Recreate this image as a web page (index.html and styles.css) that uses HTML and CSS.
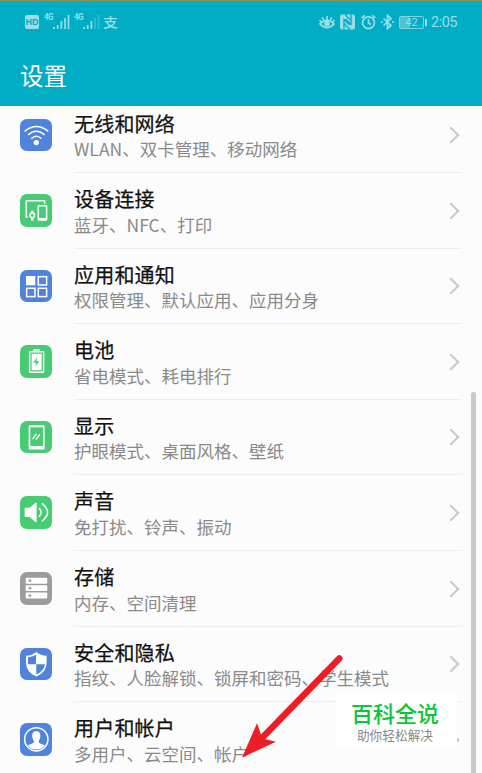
FILE: index.html
```html
<!DOCTYPE html>
<html lang="zh-CN">
<head>
    <meta charset="UTF-8">
    <meta name="viewport" content="width=device-width, initial-scale=1.0">
    <title>设置</title>
    <link rel="stylesheet" href="styles.css">
</head>
<body>
    <header>
        <div class="status-bar">
            <div class="status-left">
                <span class="hd">HD</span>
                <span class="network">4G</span>
                <svg class="signal" width="17" height="16" viewBox="0 0 17 16"><path d="M1 13v2M4.7 11v4M8.4 7v8M12 4v11M15.5 1v14"/></svg>
                <span class="network">4G</span>
                <svg class="signal" width="17" height="16" viewBox="0 0 17 16"><path d="M1 13v2M4.7 11v4M8.4 7v8"/><path opacity=".35" d="M12 4v11M15.5 1v14"/></svg>
                <span class="pay">支</span>
            </div>
            <div class="status-right">
                <svg width="16" height="16" viewBox="0 0 17 16"><path fill="none" stroke="currentColor" stroke-width="1.7" d="M1 10Q8.5 2.5 16 10Q8.5 18 1 10ZM8.5 1.5v4M3.5 3l1.500 3M13.5 3l-1.500 3M.5 6l2 2M16.500 6l-2 2"/><circle cx="8.500" cy="9.800" r="3" fill="currentColor"/></svg>
                <svg class="nfc" width="15" height="16" viewBox="0 0 15 16"><rect x="0" y=".5" width="15" height="15" rx="2" fill="currentColor"/><path fill="none" stroke="#00adc4" stroke-width="1.300" d="M4 15.500V5.500L9.500 11M11 .5V10.500L5.500 5M5 .5L11 6.500M10 15.500L4 9.500"/></svg>
                <svg class="alarm" width="15" height="16" viewBox="0 0 15 16" fill="none" stroke="currentColor" stroke-width="1.700"><circle cx="7.500" cy="8.700" r="5.900"/><path d="M7.500 5v4l2.500 1.500M.7 4l3-2.700M14.300 4l-3-2.700"/></svg>
                <svg class="bluetooth" width="13" height="16" viewBox="0 0 13 16" fill="none" stroke="currentColor" stroke-width="1.700"><path d="M2.500 4.500l7.500 7L6.500 14.500V1.500l3.500 3l-7.500 7M0 8h2M11 8h2"/></svg>
                <span class="battery"><span>42</span></span>
                <span class="time">2:05</span>
            </div>
        </div>
        <h1>设置</h1>
    </header>
    <main>
        <ul class="settings">
            <li>
                <svg class="icon blue" viewBox="0 0 98 98">
                    <g class="line"><path d="M14 37Q49 8 85 37M24 48Q49 26 74 48M34 59Q49 44 64 59"/></g>
                    <circle cx="49" cy="71" r="8"/>
                </svg>
                <div class="text"><h2>无线和网络</h2><p>WLAN、双卡管理、移动网络</p></div>
                <i class="arrow"></i>
            </li>
            <li>
                <svg class="icon green" viewBox="0 0 98 98">
                    <g class="line"><path d="M23 69H19V20H74V30"/><rect x="55" y="35" width="25" height="43" rx="2"/><circle cx="37" cy="64" r="7"/></g>
                    <path d="M33 50h8v7h-8zM33 72h8v8h-8zM54 72h27v7H54z"/>
                </svg>
                <div class="text"><h2>设备连接</h2><p>蓝牙、NFC、打印</p></div>
                <i class="arrow"></i>
            </li>
            <li>
                <svg class="icon blue" viewBox="0 0 98 98">
                    <rect x="18" y="18" width="28" height="28"/>
                    <g class="line"><rect x="55" y="20" width="25" height="25"/><rect x="20" y="55" width="25" height="25"/><rect x="55" y="55" width="25" height="25"/></g>
                </svg>
                <div class="text"><h2>应用和通知</h2><p>权限管理、默认应用、应用分身</p></div>
                <i class="arrow"></i>
            </li>
            <li>
                <svg class="icon green" viewBox="0 0 98 98">
                    <path d="M40 12h19v5H40zM35 26h30v50H35z"/>
                    <rect class="line" x="29" y="20" width="42" height="62" rx="2"/>
                    <path class="mark" d="M52 37L40 53h9l-3 13l12-17h-8z"/>
                </svg>
                <div class="text"><h2>电池</h2><p>省电模式、耗电排行</p></div>
                <i class="arrow"></i>
            </li>
            <li>
                <svg class="icon green" viewBox="0 0 98 98">
                    <rect x="26" y="13" width="48" height="73" rx="3"/>
                    <rect class="mark" x="31" y="19" width="38" height="56"/>
                    <path class="line" d="M38 54L50 38M48 56L60 40"/>
                </svg>
                <div class="text"><h2>显示</h2><p>护眼模式、桌面风格、壁纸</p></div>
                <i class="arrow"></i>
            </li>
            <li>
                <svg class="icon green" viewBox="0 0 98 98">
                    <path d="M14 37Q14 35 16 35H29L47 20Q50 19 50 22V77Q50 80 47 79L29 63H16Q14 63 14 61Z"/>
                    <path class="line" d="M57 36Q70 49 57 62M66 22Q100 49 66 76"/>
                </svg>
                <div class="text"><h2>声音</h2><p>免打扰、铃声、振动</p></div>
                <i class="arrow"></i>
            </li>
            <li>
                <svg class="icon gray" viewBox="0 0 98 98">
                    <rect x="17" y="17" width="65" height="18" rx="3"/><rect x="17" y="40" width="65" height="17" rx="3"/><rect x="17" y="62" width="65" height="18" rx="3"/>
                    <g class="mark"><circle cx="30" cy="26" r="4"/><circle cx="30" cy="48.500" r="4"/><circle cx="30" cy="71" r="4"/></g>
                </svg>
                <div class="text"><h2>存储</h2><p>内存、空间清理</p></div>
                <i class="arrow"></i>
            </li>
            <li>
                <svg class="icon blue" viewBox="0 0 98 98">
                    <path d="M49 12Q62 23 80 23V45Q79 74 49 86Q19 74 18 45V23Q36 23 49 12Z"/>
                    <path class="mark" d="M48 20V49H24V28Q37 27 48 20ZM49 49H75Q72 70 49 80Z"/>
                </svg>
                <div class="text"><h2>安全和隐私</h2><p>指纹、人脸解锁、锁屏和密码、学生模式</p></div>
                <i class="arrow"></i>
            </li>
            <li>
                <svg class="icon blue" viewBox="0 0 98 98">
                    <circle class="line" cx="49" cy="49" r="35"/>
                    <path d="M49 25C59 25 63 33 61 43C60 50 56 52 56 58Q60 62 75 67Q66 80 49 80Q32 80 23 67Q38 62 42 58C42 52 38 50 37 43C35 33 39 25 49 25Z"/>
                </svg>
                <div class="text"><h2>用户和帐户</h2><p>多用户、云空间、帐户</p></div>
                <i class="arrow"></i>
            </li>
        </ul>
        <div class="scrollbar"></div>
    </main>
    <svg class="pointer" width="106" height="106" viewBox="0 0 106 106">
        <path d="M97.300 6.500L20 86" stroke="#ee1c25" stroke-width="6.500" stroke-linecap="round"/>
        <path d="M0 105.700L15 71.300L19 82.500L23 87L34 89.700Z" fill="#ee1c25"/>
    </svg>
    <div class="watermark">
        <strong>百科全说</strong>
        <span>助你轻松解决</span>
    </div>
</body>
</html>
```
FILE: styles.css
```css
* {
    box-sizing: border-box;
}
body {
    margin: 0;
    height: 773px;
    position: relative;
    overflow: hidden;
    display: flex;
    flex-direction: column;
    background: #fcfcfc;
    font-family: "Noto Sans CJK SC", sans-serif;
}
header {
    height: 106px;
    flex: none;
    background: #00adc4;
    border-top: 1px solid #91904f;
    color: #fff;
}
.status-bar {
    display: flex;
    justify-content: space-between;
    height: 42px;
    padding: 0 25px 0 25px;
    color: #9bdde6;
}
.status-left,
.status-right {
    display: flex;
    align-items: center;
}
.hd {
    width: 14px;
    height: 14px;
    border-radius: 2px;
    background: #9bdde6;
    color: #00adc4;
    font: bold 9px/14px "Liberation Sans", sans-serif;
    text-align: center;
}
.network {
    margin: -8px 0 0 5px;
    width: 9px;
    font: bold 8px/8px "Roboto", sans-serif;
    letter-spacing: -.5px;
    transform: scaleY(1.2);
}
.signal {
    fill: none;
    stroke: currentColor;
    stroke-width: 1.700;
    margin-right: -1px;
}
.pay {
    margin-left: 4px;
    font-size: 15px;
    line-height: 16px;
    font-weight: 500;
    transform: scaleY(.85);
}
.nfc {
    margin-left: 5px;
}
.alarm {
    margin-left: 6px;
}
.bluetooth {
    margin-left: 5px;
}
.battery {
    position: relative;
    width: 25px;
    height: 13px;
    margin-left: 5px;
    border: 1px solid #7fd3df;
    border-radius: 2px;
    background: linear-gradient(to right, #4dc3d2 45%, transparent 45%);
    font: 11px/11px "Roboto", sans-serif;
    text-align: center;
}
.battery::after {
    content: "";
    position: absolute;
    right: -4px;
    top: 2px;
    width: 2px;
    height: 7px;
    background: #9bdde6;
}
.time {
    margin: 2px 0 0 7px;
    width: 26px;
    font: 14.500px/16px "Roboto", sans-serif;
    letter-spacing: -.5px;
}
h1 {
    margin: 14px 0 0 20px;
    font-size: 23.500px;
    line-height: 36px;
    font-weight: 400;
}
main {
    flex: 1;
    overflow: hidden;
    position: relative;
}
.settings {
    list-style: none;
    margin: -8.500px 0 0;
    padding: 0;
}
.settings li {
    display: flex;
    height: 75.600px;
    padding: 0 20px 0 19.500px;
}
.icon {
    width: 32.600px;
    height: 32.600px;
    flex: none;
    margin-top: 21px;
    border-radius: 7px;
    fill: #fff;
}
.blue {
    background: #4f83dc;
    --tile: #4f83dc;
}
.green {
    background: #47cc74;
    --tile: #47cc74;
}
.gray {
    background: #9c9c9c;
    --tile: #9c9c9c;
}
.line {
    fill: none;
    stroke: #fff;
    stroke-width: 4.500;
}
.mark {
    fill: var(--tile);
}
.text {
    flex: 1;
    margin-left: 21.900px;
    padding-top: 13px;
    border-bottom: 1px solid #eee;
    white-space: nowrap;
}
.text h2 {
    margin: 0;
    font-size: 20px;
    line-height: 26px;
    font-weight: 400;
    letter-spacing: .2px;
    color: #111;
    -webkit-text-stroke: .25px #111;
}
.text p {
    margin: -.5px 0 0;
    font-size: 17.500px;
    line-height: 26px;
    color: #8a8a8a;
}
.arrow {
    width: 12px;
    height: 12px;
    margin: 31.500px 5px 0 -17px;
    border: solid #c9c9c9;
    border-width: 2px 2px 0 0;
    transform: rotate(45deg);
}
.scrollbar {
    position: absolute;
    right: 6px;
    top: 286px;
    bottom: -5px;
    width: 5px;
    border-radius: 3px;
    background: #c9c9c9;
}
.pointer {
    position: absolute;
    left: 242px;
    top: 652px;
}
.watermark {
    position: absolute;
    left: 336px;
    top: 690px;
    width: 121px;
    height: 58px;
    padding: 8px 3px 0 0;
    background: #fff;
    text-align: center;
}
.watermark strong,
.watermark span {
    display: block;
}
.watermark strong {
    font-size: 22px;
    line-height: 29px;
    font-weight: 500;
    color: #09c63a;
}
.watermark span {
    font-size: 12.700px;
    line-height: 15px;
    color: #888;
}
```
